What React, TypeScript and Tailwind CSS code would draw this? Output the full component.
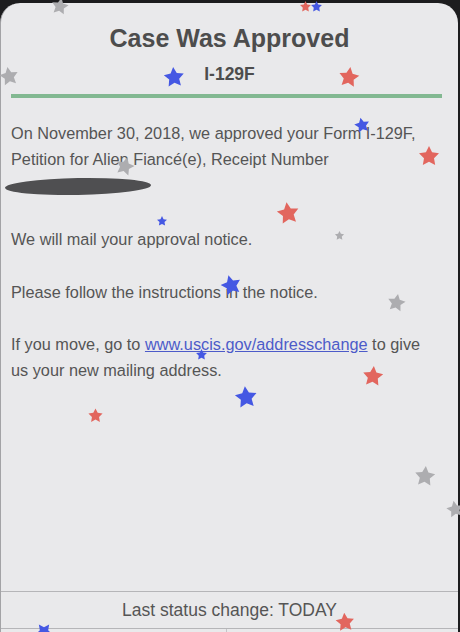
import React from "react"

type Star = { x: number; y: number; s: number; c: string; r: number }

const BLUE = "#4558e3"
const RED = "#e2665e"
const GRAY = "#adadb0"

// confetti stars lying over the card
const stars: Star[] = [
	{ x: 60, y: 6, s: 20, c: GRAY, r: 10 },
	{ x: 305, y: 6, s: 13, c: RED, r: 0 },
	{ x: 316, y: 6, s: 13, c: BLUE, r: 0 },
	{ x: 9, y: 76, s: 22, c: GRAY, r: -10 },
	{ x: 174, y: 77, s: 24, c: BLUE, r: -5 },
	{ x: 349, y: 77, s: 24, c: RED, r: 8 },
	{ x: 362, y: 125, s: 18, c: BLUE, r: -12 },
	{ x: 125, y: 166, s: 22, c: GRAY, r: 15 },
	{ x: 429, y: 156, s: 24, c: RED, r: 0 },
	{ x: 162, y: 221, s: 12, c: BLUE, r: 0 },
	{ x: 288, y: 213, s: 26, c: RED, r: -8 },
	{ x: 339, y: 235, s: 11, c: GRAY, r: 0 },
	{ x: 231, y: 285, s: 24, c: BLUE, r: -15 },
	{ x: 396, y: 302, s: 21, c: GRAY, r: 10 },
	{ x: 201, y: 354, s: 13, c: BLUE, r: 0 },
	{ x: 373, y: 376, s: 24, c: RED, r: 5 },
	{ x: 246, y: 397, s: 26, c: BLUE, r: -6 },
	{ x: 95, y: 415, s: 17, c: RED, r: 0 },
	{ x: 425, y: 476, s: 24, c: GRAY, r: 5 },
	{ x: 455, y: 509, s: 20, c: GRAY, r: -10 },
	{ x: 345, y: 622, s: 22, c: RED, r: -5 },
	{ x: 44, y: 632, s: 20, c: BLUE, r: 180 },
]

const StarIcon = ({ x, y, s, c, r }: Star) => (
	<svg
		viewBox="0 0 24 24"
		width={s}
		height={s}
		className="pointer-events-none absolute"
		style={{ left: x - s / 2, top: y - s / 2, transform: `rotate(${r}deg)` }}
	>
		<polygon
			points="12 2 15.09 8.26 22 9.27 17 14.14 18.18 21.02 12 17.77 5.82 21.02 7 14.14 2 9.27 8.91 8.26"
			fill={c}
		/>
	</svg>
)

const App = () => {
	return (
		<div className="relative h-[632px] w-[460px] overflow-hidden bg-[#1c1c1e] pt-[3px] font-['Liberation_Sans',Arial,sans-serif]">
			<div className="flex h-[629px] w-[458px] flex-col rounded-t-[20px] border-l border-[#a3a3a6] bg-[#e9e9eb] text-[#555555]">
				<h1 className="mt-[20px] text-center text-[25px] leading-[30px] font-bold text-[#4d4d4d]">Case Was Approved</h1>
				<p className="mt-[11px] text-center text-[17.5px] leading-[20px] font-bold text-[#4d4d4d]">I-129F</p>
				<div className="mt-[10px] ml-[10px] h-[4px] w-[431px] bg-[#82b891]" />

				<div className="flex flex-col px-[10px] pt-[22px] text-[16.3px] leading-[26px]">
					<p>
						On November 30, 2018, we approved your Form I-129F,
						<br />
						Petition for Alien Fiancé(e), Receipt Number
					</p>
					<div className="-ml-[6px] mt-[6px] h-[17px] w-[146px] -rotate-1 rounded-[50%] bg-[#4f4f51]" />
					<p className="mt-[31px]">We will mail your approval notice.</p>
					<p className="mt-[27px]">Please follow the instructions in the notice.</p>
					<p className="mt-[26px]">
						If you move, go to{" "}
						<span className="text-[#4d5bc9] underline">www.uscis.gov/addresschange</span> to give
						<br />
						us your new mailing address.
					</p>
				</div>

				<div className="mt-auto flex h-[38px] items-center justify-center border-t border-b border-[#b5b5b8] text-[17.5px]">
					Last status change: TODAY
				</div>
				<div className="flex h-[3px]">
					<div className="w-[226px] border-r border-[#c4c4c7]" />
				</div>
			</div>

			{stars.map((st, i) => (
				<StarIcon key={i} {...st} />
			))}
		</div>
	)
}

export default App
